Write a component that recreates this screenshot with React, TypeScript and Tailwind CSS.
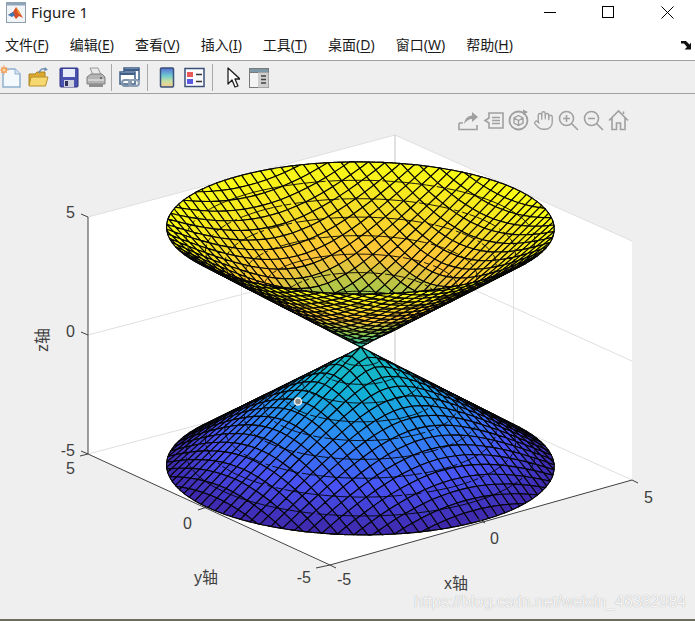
import React from "react";
import { Hand } from "lucide-react";

type Pt = [number, number, number];
const cx = 360, cy = 347;
const proj = (p: Pt): [number, number] => [
  cx + 30.4 * p[0] - 24 * p[1] + 0.15 * (p[0] + 5) * (p[1] + 5) / 5,
  cy - (8.4 * p[0] + 11.1 * p[1]) * (0.97 - 0.004 * p[2]) - 23.8 * p[2],
];
const depth = (p: Pt) => -571 * p[0] - 723 * p[1] + 539 * p[2];

const stops: [number, number, number][] = [
  [0.2422, 0.1504, 0.6603],
  [0.281, 0.3228, 0.9579],
  [0.1786, 0.5289, 0.9682],
  [0.0689, 0.6948, 0.8394],
  [0.1, 0.73, 0.72],
  [0.55, 0.78, 0.3],
  [0.997, 0.7659, 0.2199],
  [0.96, 0.87, 0.15],
  [0.9769, 0.9839, 0.0805],
];
function parula(z: number) {
  const t = Math.max(0, Math.min(0.9999, (z + 5) / 10)) * (stops.length - 1);
  const i = Math.floor(t);
  const f = t - i;
  const c = stops[i].map((a, k) => Math.round((a + (stops[i + 1][k] - a) * f) * 255));
  return `rgb(${c[0]},${c[1]},${c[2]})`;
}

type Item = { d: number; path: string; fill?: string };
function buildMesh(): Item[] {
  const items: Item[] = [];
  const N = 34;
  const h = 10 / N;
  const lift = (x: number, y: number, s: number): Pt => {
    const r = Math.hypot(x, y);
    if (r > 5) return [(x * 5) / r, (y * 5) / r, s * 5];
    return [x, y, s * r];
  };
  const toPath = (pts: Pt[], close: boolean) =>
    "M" + pts.map((p) => proj(p).map((n) => n.toFixed(1)).join(" ")).join("L") + (close ? "Z" : "");
  for (const s of [1, -1]) {
    for (let i = 0; i < N; i++) {
      for (let j = 0; j < N; j++) {
        const x0 = -5 + i * h, y0 = -5 + j * h;
        const corners = [[x0, y0], [x0 + h, y0], [x0 + h, y0 + h], [x0, y0 + h]];
        const nearest = Math.hypot(Math.max(0, Math.max(Math.abs(x0), Math.abs(x0 + h)) - h), Math.max(0, Math.max(Math.abs(y0), Math.abs(y0 + h)) - h));
        if (nearest >= 5) continue;
        const inside = corners.every(([x, y]) => Math.hypot(x, y) <= 5);
        const q: Pt[] = [];
        corners.forEach(([x, y], c) => {
          const [nx, ny] = corners[(c + 1) % 4];
          const steps = inside ? 1 : 6;
          for (let k = 0; k < steps; k++) {
            q.push(lift(x + ((nx - x) * k) / steps, y + ((ny - y) * k) / steps, s));
          }
        });
        const m = q.reduce((a, p) => [a[0] + p[0] / q.length, a[1] + p[1] / q.length, a[2] + p[2] / q.length] as Pt, [0, 0, 0] as Pt);
        items.push({ d: depth(m), path: toPath(q, true), fill: parula(m[2]) });
      }
    }
    for (let k = 1; k <= 10; k++) {
      const r = k * 0.5;
      const M = 96;
      for (let a = 0; a < M; a++) {
        const t0 = (a / M) * 2 * Math.PI, t1 = ((a + 1) / M) * 2 * Math.PI;
        const p0: Pt = [r * Math.cos(t0), r * Math.sin(t0), s * r];
        const p1: Pt = [r * Math.cos(t1), r * Math.sin(t1), s * r];
        const mid: Pt = [(p0[0] + p1[0]) / 2, (p0[1] + p1[1]) / 2, s * r];
        items.push({ d: depth(mid) + 60, path: toPath([p0, p1], false) });
      }
    }
  }
  items.sort((a, b) => a.d - b.d);
  return items;
}
const mesh = buildMesh();

const gridLines = [
  "M241.5 175V413", "M513.5 188V427",
  "M88 335L395 254L632 361", "M208 509L513 427", "M241.5 413L480 522",
  "M395 135V373",
  "M88 454L395 373L632 480",
];

function Plot() {
  return (
    <svg viewBox="0 94 695 525" className="block w-[695px] h-[525px]" style={{ fontFamily: '"Liberation Sans","Noto Sans CJK SC",sans-serif' }}>
      <path d="M88 217L395 135L632 241V480L328 565L88 454Z" fill="#fff" />
      <g stroke="#dfdfdf" strokeWidth="1" fill="none">
        <path d="M88 217L395 135L632 241" />
        <path d={gridLines[2]} />
        <path d={gridLines[0]} />
        <path d={gridLines[1]} />
        <path d={gridLines[3]} />
        <path d={gridLines[4]} />
        <path d={gridLines[6]} />
      </g>
      <path d={gridLines[5]} stroke="#c4c4c4" strokeWidth="1" fill="none" />
      <g stroke="#050505" strokeWidth="1.100" strokeLinejoin="round">
        {mesh.map((it, i) =>
          it.fill ? <path key={i} d={it.path} fill={it.fill} /> : <path key={i} d={it.path} fill="none" strokeWidth="0.9" />
        )}
      </g>
      <circle cx="298" cy="401.500" r="3.500" fill="#888" stroke="#eee" strokeWidth="1.500" />
      <g stroke="#404040" strokeWidth="1" fill="none">
        <path d="M88 217V454L330 565L632 480" />
        <path d="M81 214L88 217M81 332L88 335M81 451L88 454" />
        <path d="M88 454L80 456M198 510L207 507M316 568L330 565" />
        <path d="M330 565L336 568M478 519L485 523M632 480L638 483" />
      </g>
      <g fill="#404040" fontSize="16">
        <text x="75" y="218" textAnchor="end">5</text>
        <text x="75" y="337" textAnchor="end">0</text>
        <text x="75" y="456" textAnchor="end">-5</text>
        <text x="75" y="474" textAnchor="end">5</text>
        <text x="192" y="529" textAnchor="end">0</text>
        <text x="311" y="583" textAnchor="end">-5</text>
        <text x="337" y="585">-5</text>
        <text x="490" y="544">0</text>
        <text x="644" y="503">5</text>
        <text x="194" y="583">y轴</text>
        <text x="444" y="589">x轴</text>
        <text transform="translate(48 352) rotate(-90)">z轴</text>
      </g>
    </svg>
  );
}

const S = ({ children, w = 22, h = 24, className = "" }: { children: React.ReactNode; w?: number; h?: number; className?: string }) => (
  <svg width={w} height={h} viewBox={`0 0 ${w} ${h}`} className={"block shrink-0 " + className}>{children}</svg>
);

const NewIcon = ({ className }: { className: string }) => (
  <S className={className}>
    <path d="M3 4H15L20 9V22H3Z" fill="#f4f9fe" stroke="#8fb0d0" strokeWidth="1.500" />
    <path d="M15 4V9H20" fill="#d9e6f2" stroke="#8fb0d0" />
    <circle cx="4" cy="5" r="3" fill="#f39a50" />
    <path d="M4 0V10M-1 5H9M1 2L7 8M7 2L1 8" stroke="#f0a060" strokeWidth="0.8" />
    <circle cx="4" cy="5" r="1.500" fill="#fbd8a8" />
  </S>
);
const OpenIcon = ({ className }: { className: string }) => (
  <S className={className}>
    <path d="M1 9H7L9 7H17V20H1Z" fill="#dba830" stroke="#a88420" />
    <path d="M1 21L3 12H20L17.500 21Z" fill="#f6d870" stroke="#b89028" />
    <path d="M11 8C12 4 15 3 18 4" fill="none" stroke="#6f8fb0" strokeWidth="1.500" />
    <path d="M17 2L20 5L16 6Z" fill="#6f8fb0" />
  </S>
);
const SaveIcon = ({ className }: { className: string }) => (
  <S className={className}>
    <rect x="2" y="3" width="18" height="19" rx="1" fill="#4a52b0" stroke="#2c3080" />
    <rect x="5" y="4" width="12" height="8" fill="#e8ecf8" />
    <rect x="6" y="15" width="10" height="7" fill="#cfd2de" />
    <rect x="7" y="16" width="3" height="5" fill="#303060" />
  </S>
);
const PrintIcon = ({ className }: { className: string }) => (
  <S className={className}>
    <path d="M5 3H13L16 10H8Z" fill="#e9e9e9" stroke="#999" />
    <path d="M2 12L6 9H17L20 12V19H2Z" fill="#b4b4b4" stroke="#808080" />
    <path d="M3 15H19" stroke="#eee" />
    <path d="M4 19H18V22H4Z" fill="#8e8e8e" />
    <circle cx="16" cy="13" r="1" fill="#555" />
  </S>
);
const LinkIcon = ({ className }: { className: string }) => (
  <S className={className}>
    <rect x="5" y="3" width="15" height="12" fill="#fff" stroke="#3f5f88" strokeWidth="1.500" />
    <path d="M5 5H20" stroke="#3f5f88" strokeWidth="2" />
    <rect x="1" y="7" width="15" height="12" fill="#fff" stroke="#3f5f88" strokeWidth="1.500" />
    <path d="M1 9H16" stroke="#3f5f88" strokeWidth="2" />
    <rect x="3" y="15" width="9" height="6" rx="3" fill="none" stroke="#7f93aa" strokeWidth="2" />
    <rect x="10" y="15" width="10" height="6" rx="3" fill="none" stroke="#8c9eb4" strokeWidth="2" />
  </S>
);
const BarIcon = ({ className }: { className: string }) => (
  <S w={16} className={className}>
    <defs>
      <linearGradient id="cb" x1="0" y1="0" x2="0" y2="1">
        <stop offset="0" stopColor="#5570d8" />
        <stop offset="0.4" stopColor="#70c8d0" />
        <stop offset="0.7" stopColor="#c8e0a0" />
        <stop offset="1" stopColor="#f8c890" />
      </linearGradient>
    </defs>
    <rect x="1.500" y="3" width="13" height="19" rx="1" fill="url(#cb)" stroke="#3a5078" strokeWidth="1.500" />
  </S>
);
const LegendIcon = ({ className }: { className: string }) => (
  <S w={21} className={className}>
    <rect x="1" y="3.500" width="19" height="18" fill="#fbfbff" stroke="#3a5078" strokeWidth="1.500" />
    <rect x="3" y="7" width="6" height="5" fill="#e85a5a" />
    <rect x="3" y="14" width="6" height="5" fill="#5a5ae0" />
    <path d="M12 9.500H18M12 16.500H18" stroke="#333" strokeWidth="1.500" />
  </S>
);
const CursorIcon = ({ className }: { className: string }) => (
  <S w={14} className={className}>
    <path d="M2 3V19L6 15L9 22L12 21L9 14H14Z" fill="#fff" stroke="#202020" strokeWidth="1.300" strokeLinejoin="round" />
  </S>
);
const PanelIcon = ({ className }: { className: string }) => (
  <S w={20} className={className}>
    <rect x="0.500" y="3.500" width="19" height="19" fill="#f4f4f4" stroke="#7a7a7a" />
    <rect x="0.500" y="3.500" width="19" height="4" fill="#7d98a6" stroke="#7a7a7a" />
    <rect x="9" y="7.500" width="10.500" height="15" fill="#cfcfcf" />
    <path d="M12 11H17M12 14.500H17M12 18H17" stroke="#444" strokeWidth="1.500" />
  </S>
);

const gray = "#a0a0a0";
const A = ({ children, w = 21 }: { children: React.ReactNode; w?: number }) => (
  <svg width={w} height="22" viewBox="0 0 21 22" fill="none" stroke={gray} strokeWidth="1.600" className="block shrink-0">{children}</svg>
);
function AxesTools() {
  return (
    <div className="absolute left-[458px] top-[15px] flex gap-[4px]">
      <A>
        <path d="M1 14V20.500H19V16M1 14H5" />
        <path d="M6 15C7 9 10 7 14 6.500V3L20 8L14 13V10C11 10 8 12 6 15Z" fill={gray} stroke="none" />
      </A>
      <A>
        <path d="M6 4H20V19H6V14L2 11.500L6 9Z" />
        <path d="M9 8.500H17M9 11.500H17M9 14.500H17" />
      </A>
      <A>
        <circle cx="10.500" cy="11.500" r="9" strokeWidth="1.800" />
        <path d="M10.500 6.500L15 9V14L10.500 16.500L6 14V9ZM6 9L10.500 11.500L15 9M10.500 11.500V16.500" strokeWidth="1.400" />
        <path d="M15 0.500L20 3L15 6Z" fill={gray} stroke="none" />
      </A>
      <div className="w-[21px] h-[22px] flex items-center justify-center text-[#a0a0a0]"><Hand size={21} strokeWidth={1.500} /></div>
      <A>
        <circle cx="8.500" cy="9.500" r="7" />
        <path d="M13.500 14.500L20 21M5 9.500H12M8.500 6V13" />
      </A>
      <A>
        <circle cx="8.500" cy="9.500" r="7" />
        <path d="M13.500 14.500L20 21M5 9.500H12" />
      </A>
      <A>
        <path d="M1 11.500L10.500 2L20 11.500M4 9V20.500H8.500V14H12.500V20.500H17V9M15.500 2.500V5" />
      </A>
    </div>
  );
}

const menus: [string, string][] = [
  ["文件", "F"], ["编辑", "E"], ["查看", "V"], ["插入", "I"],
  ["工具", "T"], ["桌面", "D"], ["窗口", "W"], ["帮助", "H"],
];

export default function App() {
  return (
    <div className="relative w-[695px] h-[621px] overflow-hidden bg-[#efefef] flex flex-col" style={{ fontFamily: '"Noto Sans","Noto Sans CJK SC",sans-serif' }}>
      <div className="h-[30px] bg-white flex items-center pb-[6px] relative shrink-0">
        <svg width="20" height="21" viewBox="0 0 20 21" className="ml-[6px] block">
          <rect x="0.500" y="0.500" width="19" height="20" fill="#f2f5f8" stroke="#8f9fae" />
          <rect x="0.500" y="0.500" width="19" height="3" fill="#8fa6b8" />
          <path d="M2 13L7 10L10 5L13 9L17 16L13 14L10 17L7 13Z" fill="#d8502a" />
          <path d="M2 13L7 10L9 13L6 15Z" fill="#3a78b8" />
          <path d="M10 5L13 9L15 13L12 11Z" fill="#f0a030" />
        </svg>
        <span className="ml-[5px] text-[15px] text-[#202020] leading-none">Figure 1</span>
        <div className="ml-auto flex items-center">
          <div className="w-[12px] h-px bg-black mr-[46px]" />
          <div className="w-[12px] h-[12px] border border-black mr-[47px]" />
          <svg width="13" height="13" viewBox="0 0 13 13" className="mr-[21px] block"><path d="M0.500 0.500L12.500 12.500M12.500 0.500L0.500 12.500" stroke="#000" strokeWidth="1" /></svg>
        </div>
      </div>
      <div className="h-[31px] bg-white flex items-center pl-[5px] gap-[21px] text-[14px] text-[#1a1a1a] shrink-0 border-b border-[#a0a0a0] relative">
        {menus.map(([t, k]) => (
          <span key={k} className="whitespace-nowrap leading-none">
            {t}(<span className="underline underline-offset-2">{k}</span>)
          </span>
        ))}
        <svg width="12" height="10" viewBox="0 0 12 10" className="absolute left-[681px] top-[10px] block">
          <path d="M0 1H5L8.500 4.500L10 2.500V9.500H3.500L6 7L3 3.500H0Z" fill="#111" />
        </svg>
      </div>
      <div className="h-[33px] bg-[#efefef] flex items-center border-b border-[#a0a0a0] shrink-0">
        <NewIcon className="ml-0" />
        <OpenIcon className="ml-[6px]" />
        <SaveIcon className="ml-[8px]" />
        <PrintIcon className="ml-[5px]" />
        <div className="w-px h-[27px] bg-[#a8a8a8] ml-[4px]" />
        <LinkIcon className="ml-[7px]" />
        <div className="w-px h-[27px] bg-[#a8a8a8] ml-[6px]" />
        <BarIcon className="ml-[11px]" />
        <LegendIcon className="ml-[9px]" />
        <div className="w-px h-[27px] bg-[#a8a8a8] ml-[7px]" />
        <CursorIcon className="ml-[13px]" />
        <PanelIcon className="ml-[9px]" />
      </div>
      <div className="relative flex-1 border-b-2 border-[#6e6e5e]">
        <Plot />
        <AxesTools />
        <div
          className="absolute left-[414px] top-[498px] text-[16px] leading-[20px] text-white/90 whitespace-nowrap"
          style={{ fontFamily: '"Liberation Sans",sans-serif', textShadow: "0 0 1px #999" }}
        >
          https://blog.csdn.net/weixin_46382984
        </div>
      </div>
    </div>
  );
}
